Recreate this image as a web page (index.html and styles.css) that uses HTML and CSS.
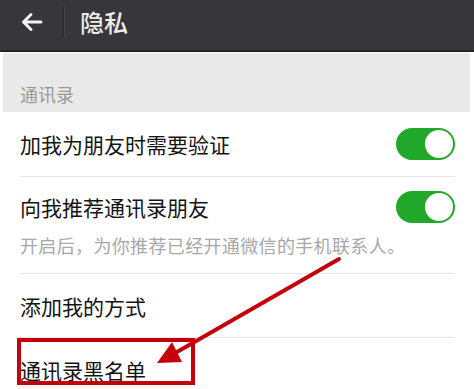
FILE: index.html
```html
<!DOCTYPE html>
<html lang="zh-CN">
<head>
  <meta charset="UTF-8" />
  <meta name="viewport" content="width=device-width, initial-scale=1.0"/>
  <title>隐私</title>
  <link rel="stylesheet" href="styles.css">
</head>
<body>
  <div class="topbar">
    <span class="back">
      <svg width="22" height="20" viewBox="0 0 22 20">
        <path d="M20 10H3M10 2.5L2.5 10L10 17.5" fill="none" stroke="#f2f2f2" stroke-width="3" stroke-linecap="round" stroke-linejoin="round"/>
      </svg>
    </span>
    <span class="sep"></span>
    <span class="title">隐私</span>
  </div>

  <div class="section-head">通讯录</div>

  <div class="row">
    <span class="label">加我为朋友时需要验证</span>
    <span class="switch on"><i></i></span>
  </div>

  <div class="row tall">
    <div class="row-main">
      <span class="label">向我推荐通讯录朋友</span>
      <span class="switch on"><i></i></span>
    </div>
    <div class="sub">开启后，为你推荐已经开通微信的手机联系人。</div>
  </div>

  <div class="row">
    <span class="label">添加我的方式</span>
  </div>

  <div class="row">
    <span class="label">通讯录黑名单</span>
  </div>

  <!-- 标注：红框和箭头 -->
  <svg class="mark" width="474" height="389" viewBox="0 0 474 389">
    <rect x="19" y="340" width="174" height="43" fill="none" stroke="#c4000b" stroke-width="4"/>
    <line x1="339" y1="259" x2="170" y2="356" stroke="#c4000b" stroke-width="4" stroke-linecap="round"/>
    <polygon points="157,363 172,342 182,362" fill="#c4000b"/>
  </svg>
</body>
</html>
```

FILE: styles.css
```css
html, body {
  overflow: hidden;
}
body {
  margin: 0;
  width: 474px;
  height: 389px;
  position: relative;
  background-color: #ffffff;
  font-family: "Noto Sans CJK SC", "Noto Sans", sans-serif;
  color: #141414;
}
.topbar {
  height: 52px;
  box-sizing: border-box;
  padding-bottom: 6px;
  display: flex;
  align-items: center;
  background-color: #37373b;
  border-bottom: 2px solid #242427;
}
.back {
  width: 22px;
  height: 20px;
  margin-left: 21px;
  display: flex;
}
.sep {
  width: 1px;
  height: 30px;
  margin-left: 20px;
  background-color: #29292c;
  border-right: 1px solid #444448;
}
.title {
  margin-left: 15px;
  font-size: 24px;
  line-height: 30px;
  font-weight: 500;
  color: #ececec;
}
.section-head {
  height: 60px;
  box-sizing: border-box;
  margin: 0 4px 0 3px;
  padding: 28px 0 0 17px;
  background-color: #e9e9e9;
  border-top: 2px solid #f3f3f3;
  font-size: 18px;
  line-height: 24px;
  color: #9a9a9a;
}
.row {
  height: 64px;
  box-sizing: border-box;
  margin: 0 19px 0 20px;
  display: flex;
  align-items: center;
  justify-content: space-between;
}
.row + .row {
  border-top: 1px solid #e6e6e6;
}
.row.tall {
  height: 97px;
  display: block;
}
.row-main {
  height: 60px;
  display: flex;
  align-items: center;
  justify-content: space-between;
}
.label {
  font-size: 21px;
  line-height: 28px;
}
.sub {
  margin-top: -3px;
  font-size: 18px;
  line-height: 22px;
  letter-spacing: 0.35px;
  color: #a8a8a8;
}
.switch {
  width: 59px;
  height: 32px;
  box-sizing: border-box;
  border-radius: 16px;
  background-color: #e5e5e5;
  padding: 2px;
  display: flex;
}
.switch i {
  width: 28px;
  height: 28px;
  border-radius: 50%;
  background-color: #ffffff;
}
.switch.on {
  background-color: #21a82a;
  justify-content: flex-end;
}
.mark {
  position: absolute;
  top: 0;
  left: 0;
  pointer-events: none;
}
```
